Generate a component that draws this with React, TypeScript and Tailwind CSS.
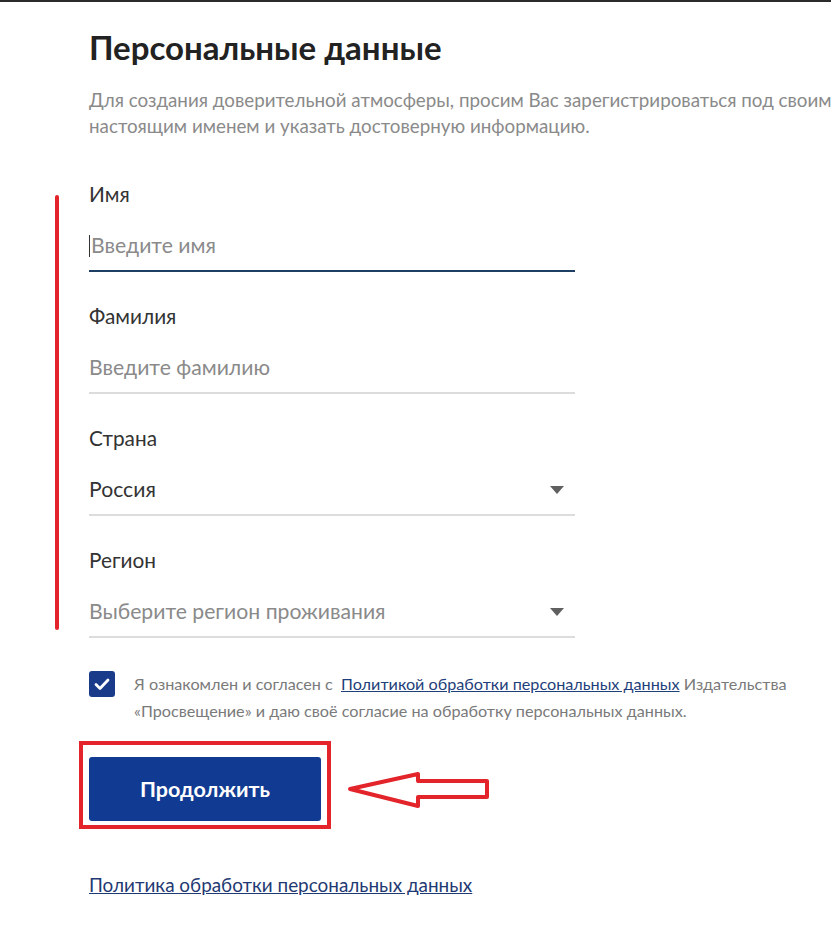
import React from 'react'

const font = { fontFamily: 'Lato, "Open Sans", sans-serif' }

function Caret() {
  return (
    <svg width="14" height="8" viewBox="0 0 14 8" className="shrink-0">
      <path d="M0 0 H14 L7 8 Z" fill="#606060" />
    </svg>
  )
}

function Field({
  label,
  placeholder,
  value,
  select,
  active,
}: {
  label: string
  placeholder?: string
  value?: string
  select?: boolean
  active?: boolean
}) {
  return (
    <div className="flex flex-col">
      <div className="h-6 text-[20.8px] leading-6 text-[#333]">{label}</div>
      <div
        className={`mt-[16px] flex h-[50px] items-center justify-between border-b-2 pr-[11px] ${
          active ? 'border-[#1d3f63]' : 'border-[#dcdcdc]'
        }`}
      >
        {value ? (
          <span className="text-[21.2px] text-[#333]">{value}</span>
        ) : (
          <span className="flex items-center text-[21.2px] text-[#8a8a8a]">
            {active && <span className="mr-px inline-block h-[22px] w-px bg-[#333]" />}
            {placeholder}
          </span>
        )}
        {select && <Caret />}
      </div>
    </div>
  )
}

export default function App() {
  return (
    <div className="relative h-[928px] w-[831px] overflow-hidden bg-white" style={font}>
      <div className="h-[2px] w-full bg-[#2b2b2b]" />

      {/* annotation: red side bar */}
      <div className="absolute left-[55px] top-[195px] h-[435px] w-[4px] rounded-sm bg-[#e3242b]" />

      <div className="pl-[89px] pt-[25px]">
        <h1 className="text-[33px] font-bold leading-[40px] text-[#222]">Персональные данные</h1>
        <p className="mt-[20px] w-[800px] text-[18.8px] leading-[26px] text-[#8a8a8a]">
          Для создания доверительной атмосферы, просим Вас зарегистрироваться под своим
          <br />
          настоящим именем и указать достоверную информацию.
        </p>

        <div className="mt-[43px] flex w-[486px] flex-col gap-[32px]">
          <Field label="Имя" placeholder="Введите имя" active />
          <Field label="Фамилия" placeholder="Введите фамилию" />
          <Field label="Страна" value="Россия" select />
          <Field label="Регион" placeholder="Выберите регион проживания" select />
        </div>

        <div className="mt-[32px] flex items-start gap-[19px]">
          <div className="mt-px flex h-[26px] w-[26px] shrink-0 items-center justify-center rounded-[3px] bg-[#1a3a8a]">
            <svg width="16" height="13" viewBox="0 0 16 13">
              <path d="M2 6.5 L6 10.5 L14 2" fill="none" stroke="#fff" strokeWidth="2.8" strokeLinecap="round" strokeLinejoin="round" />
            </svg>
          </div>
          <p className="whitespace-nowrap text-[16.2px] leading-[27px] text-[#7a7a7a]">
            Я ознакомлен и согласен с{' '}
            <a href="#" className="ml-1 text-[#1f3f7a] underline">
              Политикой обработки персональных данных
            </a>{' '}
            Издательства
            <br />
            «Просвещение» и даю своё согласие на обработку персональных данных.
          </p>
        </div>

        <div className="relative mt-[33px] inline-block">
          <button className="h-[64px] w-[232px] rounded-[3px] bg-[#113b92] text-[21.5px] font-bold text-white">
            Продолжить
          </button>
          {/* annotation: red frame */}
          <div className="absolute -left-[10px] -top-[16px] h-[88px] w-[252px] border-4 border-[#e3242b]" />
        </div>

        <div className="mt-[50px]">
          <a href="#" className="text-[18.9px] text-[#1f3a73] underline">
            Политика обработки персональных данных
          </a>
        </div>
      </div>

      {/* annotation: arrow */}
      <svg className="absolute left-[340px] top-[765px]" width="155" height="50" viewBox="340 765 155 50">
        <path
          d="M350 789 L418 774 L418 781 L487 781 L487 797 L418 797 L418 806 Z"
          fill="none"
          stroke="#e3242b"
          strokeWidth="4"
          strokeLinejoin="round"
        />
      </svg>
    </div>
  )
}
